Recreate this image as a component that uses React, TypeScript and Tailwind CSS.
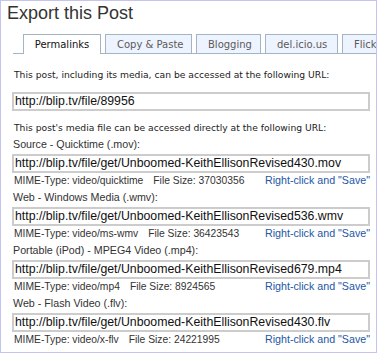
import React from 'react';

const tabs = ['Permalinks', 'Copy & Paste', 'Blogging', 'del.icio.us', 'Flickr'];
const tabWidths = ['w-[78px]', 'w-[87px]', 'w-[65px]', 'w-[73px]', 'w-[70px]'];

const files = [
  {
    label: 'Source - Quicktime (.mov):',
    url: 'http://blip.tv/file/get/Unboomed-KeithEllisonRevised430.mov',
    mime: 'video/quicktime',
    size: '37030356',
  },
  {
    label: 'Web - Windows Media (.wmv):',
    url: 'http://blip.tv/file/get/Unboomed-KeithEllisonRevised536.wmv',
    mime: 'video/ms-wmv',
    size: '36423543',
  },
  {
    label: 'Portable (iPod) - MPEG4 Video (.mp4):',
    url: 'http://blip.tv/file/get/Unboomed-KeithEllisonRevised679.mp4',
    mime: 'video/mp4',
    size: '8924565',
  },
  {
    label: 'Web - Flash Video (.flv):',
    url: 'http://blip.tv/file/get/Unboomed-KeithEllisonRevised430.flv',
    mime: 'video/x-flv',
    size: '24221995',
  },
];

const UrlBox = ({ value }: { value: string }) => (
  <div className="flex h-[19px] items-center overflow-hidden whitespace-nowrap border-2 border-[#cccccc] bg-white pl-[1px] text-[12.3px] leading-[15px] text-[#111]">
    {value}
  </div>
);

export default function App() {
  return (
    <div className="h-[353px] w-[377px] overflow-hidden border border-[#c4c4f2] bg-white font-['Liberation_Sans',Arial,sans-serif]">
      <h1 className="mt-[1px] pl-[6px] text-[18px] leading-[22px] font-normal text-[#333333]">Export this Post</h1>

      <div className="ml-[12px] mt-[10px] flex items-end gap-[4px] whitespace-nowrap border-b border-[#a3b4c4] pl-[10px] font-['DejaVu_Sans',Verdana,sans-serif] text-[10px]">
        {tabs.map((t, i) =>
          i === 0 ? (
            <div
              key={t}
              className={`${tabWidths[i]} -mb-px flex h-[20px] shrink-0 items-center justify-center border-x border-t border-[#a3b4c4] bg-white pb-[1px] text-[#111]`}
            >
              {t}
            </div>
          ) : (
            <div
              key={t}
              className={`${tabWidths[i]} flex h-[19px] shrink-0 items-center border-x border-t border-[#a3b4c4] bg-[#eef4ff] pl-[11px] text-[#5a5a5a]`}
            >
              {t}
            </div>
          )
        )}
      </div>

      <div className="pl-[11px] pr-[6px]">
        <p className="mt-[15px] pl-[2px] font-['DejaVu_Sans',Verdana,sans-serif] text-[9.2px] leading-[12px] text-[#222]">
          This post, including its media, can be accessed at the following URL:
        </p>
        <div className="mt-[11px]">
          <UrlBox value="http://blip.tv/file/89956" />
        </div>
        <p className="mt-[11px] pl-[2px] font-['DejaVu_Sans',Verdana,sans-serif] text-[9.2px] leading-[12px] text-[#222]">
          This post's media file can be accessed directly at the following URL:
        </p>

        <div className="mt-[3px] flex flex-col gap-[2px]">
          {files.map((f) => (
            <div key={f.url} className="text-[10.7px] leading-[14px] text-[#333]">
              <div className="mb-[3px] pl-[1px]">{f.label}</div>
              <UrlBox value={f.url} />
              <div className="flex items-baseline whitespace-nowrap pl-[2px]">
                <span className="text-[10.3px]">MIME-Type: {f.mime}</span>
                <span className="ml-[10px] text-[10.3px]">File Size: {f.size}</span>
                <a className="ml-auto text-[#2356a6]" href="#">
                  Right-click and "Save"
                </a>
              </div>
            </div>
          ))}
        </div>
      </div>
    </div>
  );
}
